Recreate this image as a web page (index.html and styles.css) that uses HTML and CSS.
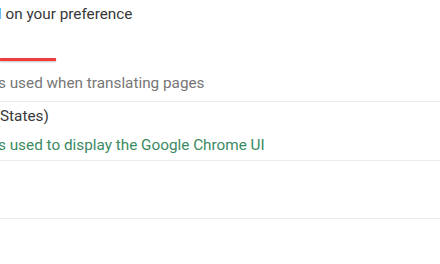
FILE: index.html
```html
<!DOCTYPE html>
<html>
<head>
<meta charset="utf-8">
<link rel="stylesheet" href="styles.css">
</head>
<body>
<div class="page">
  <p class="line pref shift-d"><span class="pre"><span class="link">Languages ordere</span></span><span class="link">d</span><span> on your preference</span></p>
  <div class="tab-indicator"></div>
  <p class="line sub shift-s"><span class="pre">This language i</span><span>s used when translating pages</span></p>
  <div class="row">
    <p class="line main"><span class="pre">English (United </span><span>States)</span></p>
    <p class="line note shift-s"><span class="pre">This language i</span><span>s used to display the Google Chrome UI</span></p>
  </div>
  <div class="row empty"></div>
</div>
</body>
</html>
```

FILE: styles.css
```css
html, body {
  margin: 0;
  padding: 0;
  background: #ffffff;
}
body {
  width: 440px;
  height: 264px;
  overflow: hidden;
  font-family: Roboto, "Noto Sans", Arial, sans-serif;
  font-size: 15.3px;
}
.page {
  display: flex;
  flex-direction: column;
}
.line {
  display: flex;
  margin: 0;
  line-height: 20px;
  white-space: pre;
}
.pre {
  display: flex;
  justify-content: flex-end;
  width: 0;
  white-space: pre;
}
.shift-d { margin-left: -7px; }
.shift-s { margin-left: -2px; }
.pref {
  padding-top: 4px;
  color: #383838;
}
.link {
  color: #5196ea;
}
.tab-indicator {
  margin-top: 34px;
  width: 56px;
  height: 3px;
  background: #f03c3c;
  box-shadow: 0 1px 2px rgba(0, 0, 0, 0.25);
}
.sub {
  margin-top: 12px;
  color: #767676;
}
.row {
  border-top: 1px solid #ececec;
  margin-top: 8px;
  padding-top: 4px;
}
.main {
  color: #383838;
}
.note {
  margin-top: 9px;
  color: #3a8a62;
}
.row.empty {
  margin-top: 5px;
  height: 57px;
  padding: 0;
  border-bottom: 1px solid #ececec;
}
```
